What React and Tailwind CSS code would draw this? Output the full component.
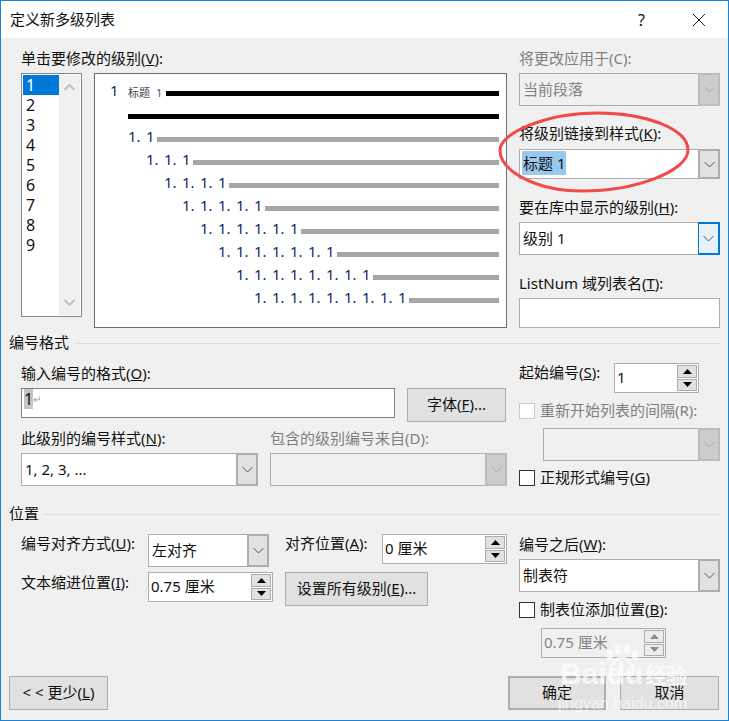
import React from 'react'

const Chevron = ({ className = "stroke-[#555]" }) => (
    <svg width="11" height="7" viewBox="0 0 11 7" fill="none" className={className}>
        <path d="M0.5 1L5.5 6L10.5 1" strokeWidth="1" />
    </svg>
)

const Combo = ({ className, text, mode = "normal" }) => {
    const boxStyle = mode === "disabled" ? "bg-[#f0f0f0]" : "bg-white"
    const textStyle = mode === "disabled" ? "text-[#838383]" : "text-[#111]"
    let arrowStyle = "bg-[#e1e1e1] border-2 border-[#adadad] border-l-[#adadad]"
    if (mode === "disabled") arrowStyle = "bg-[#cccccc] border-2 border-[#bcbcbc]"
    if (mode === "focus") arrowStyle = "bg-[#e5f1fb] border-l border-r-2 border-y-2 border-[#0078d7]"
    return (
        <div className={`flex border border-[#adadad] ${boxStyle} ${className}`}>
            <div className={`flex-1 flex items-center pl-[3px] text-[15px] ${textStyle}`}>{text}</div>
            <div className={`w-[22px] -my-px -mr-px flex items-center justify-center ${arrowStyle}`}>
                <Chevron className={mode === "disabled" ? "stroke-[#a8a8a8]" : "stroke-[#555]"} />
            </div>
        </div>
    )
}

const Spin = ({ className, text, disabled }) => {
    const arrow = disabled ? "fill-[#8a8a8a]" : "fill-black"
    const part = "flex-1 flex items-center justify-center border border-[#adadad] bg-[#e1e1e1]"
    return (
        <div className={`flex h-[30px] border border-[#adadad] ${disabled ? "bg-[#f0f0f0]" : "bg-white"} ${className}`}>
            <div className={`flex-1 flex items-center pl-[2px] pb-[2px] text-[15px] ${disabled ? "text-[#838383]" : "text-[#111]"}`}>{text}</div>
            <div className="w-[20px] flex flex-col gap-px py-px mr-px">
                <div className={`${part} ${disabled ? "bg-[#ececec]" : ""}`}>
                    <svg width="9" height="5" viewBox="0 0 9 5" className={arrow}><path d="M4.5 0L9 5H0Z" /></svg>
                </div>
                <div className={`${part} ${disabled ? "bg-[#ececec]" : ""}`}>
                    <svg width="9" height="5" viewBox="0 0 9 5" className={arrow}><path d="M0 0H9L4.5 5Z" /></svg>
                </div>
            </div>
        </div>
    )
}

const Btn = ({ className, children }) => (
    <div className={`h-[34px] flex items-center justify-center pb-[2px] bg-[#e1e1e1] border border-[#adadad] text-[15px] text-[#111] ${className}`}>
        {children}
    </div>
)

const Label = ({ className = "", children, off }) => (
    <div className={`h-[20px] flex items-center pb-[2px] whitespace-nowrap text-[15px] ${off ? "text-[#7f7f7f]" : "text-[#111]"} ${className}`}>
        <span>{children}</span>
    </div>
)

const Check = ({ off }) => (
    <div className={`w-[16px] h-[16px] border ${off ? "border-[#cccccc]" : "border-[#333]"} bg-white`} />
)

const Section = ({ title }) => (
    <div className="h-[20px] pl-[8px] pr-[8px] flex items-center gap-[5px]">
        <span className="pb-[2px] text-[15px] text-[#111]">{title}</span>
        <div className="flex-1 h-px bg-[#dcdcdc]" />
    </div>
)

const levels = [
    { pad: "pl-[33px]", k: 2 },
    { pad: "pl-[51px]", k: 3 },
    { pad: "pl-[69px]", k: 4 },
    { pad: "pl-[87px]", k: 5 },
    { pad: "pl-[105px]", k: 6 },
    { pad: "pl-[123px]", k: 7 },
    { pad: "pl-[141px]", k: 8 },
    { pad: "pl-[159px]", k: 9 },
]

const Preview = () => (
    <div className="flex-1 h-[255px] border border-[#6d6d6d] bg-white pt-[8px] pr-[7px]">
        <div className="h-[23px] flex items-center pl-[15px]">
            <span className="w-[18px] pb-[7px] text-[15px] text-[#0d2a66]">1</span>
            <span className="w-[38px] text-[11px] text-[#444] whitespace-nowrap">标题<span className="ml-[6px] text-[#2a5a90]">1</span></span>
            <div className="flex-1 h-[5px] bg-black" />
        </div>
        <div className="h-[23px] flex items-center pl-[33px]">
            <div className="flex-1 h-[5px] bg-black" />
        </div>
        {levels.map((l) => (
            <div key={l.k} className={`h-[23px] flex items-center ${l.pad}`}>
                <div className="flex pb-[6px] text-[15px] leading-[17px] text-[#0d2a66]">
                    {Array.from({ length: l.k - 1 }).map((_, i) => (
                        <span key={i} className="w-[18px]">1.</span>
                    ))}
                    <span className="w-[11px]">1</span>
                </div>
                <div className="flex-1 h-[5px] bg-[#a6a6a6]" />
            </div>
        ))}
    </div>
)

const LevelList = () => (
    <div className="w-[61px] h-[244px] flex border border-[#828790] bg-white p-px">
        <div className="w-[37px] text-[16px] leading-[20px] text-[#111]">
            {[1, 2, 3, 4, 5, 6, 7, 8, 9].map((n) => (
                <div key={n} className={`h-[20px] pl-[3px] ${n === 1 ? "bg-[#0078d7] text-white" : ""}`}>{n}</div>
            ))}
        </div>
        <div className="w-[21px] bg-[#f0f0f0] flex flex-col items-center justify-between py-[9px]">
            <svg width="11" height="7" viewBox="0 0 11 7" fill="none" className="stroke-[#c0c0c0]"><path d="M0.5 6L5.5 1L10.5 6" strokeWidth="2" /></svg>
            <svg width="11" height="7" viewBox="0 0 11 7" fill="none" className="stroke-[#c0c0c0]"><path d="M0.5 1L5.5 6L10.5 1" strokeWidth="2" /></svg>
        </div>
    </div>
)

export default function App() {
    return (
        <div className="relative w-[729px] h-[721px] flex flex-col border border-[#1883d7] bg-[#f0f0f0] overflow-hidden font-['Noto_Sans','Noto_Sans_CJK_SC',sans-serif]">
            {/* title bar */}
            <div className="h-[37px] shrink-0 bg-white flex items-center pl-[9px] text-[15px] text-[#111]">
                <span>定义新多级列表</span>
                <span className="ml-auto mr-[47px] text-[16px]">?</span>
                <svg width="14" height="14" viewBox="0 0 14 14" fill="none" className="mr-[22px] stroke-[#222]">
                    <path d="M1 1L13 13M13 1L1 13" strokeWidth="1" />
                </svg>
            </div>

            {/* levels + style links */}
            <div className="flex pl-[20px] pt-[11px]">
                <div className="w-[486px]">
                    <Label>单击要修改的级别(<u>V</u>):</Label>
                    <div className="flex gap-[12px] mt-[4px] items-start">
                        <LevelList />
                        <Preview />
                    </div>
                </div>
                <div className="w-[201px] ml-[12px]">
                    <Label off>将更改应用于(C):</Label>
                    <Combo className="h-[33px] mt-[4px]" text="当前段落" mode="disabled" />
                    <Label className="mt-[18px]">将级别链接到样式(<u>K</u>):</Label>
                    <Combo
                        className="h-[30px] mt-[5px]"
                        text={<span className="bg-[#99c9ef] -ml-px -mt-[3px] px-px leading-[24px]">标题 1</span>}
                    />
                    <Label className="mt-[19px]">要在库中显示的级别(<u>H</u>):</Label>
                    <Combo className="h-[33px] mt-[4px]" text="级别 1" mode="focus" />
                    <Label className="mt-[19px]">ListNum 域列表名(<u>T</u>):</Label>
                    <div className="h-[30px] mt-[4px] bg-white border border-[#adadad]" />
                </div>
            </div>

            {/* number format */}
            <div className="mt-[5px]">
                <Section title="编号格式" />
            </div>
            <div className="flex pl-[20px]">
                <div className="w-[486px] pt-[11px]">
                    <Label>输入编号的格式(<u>O</u>):</Label>
                    <div className="flex items-start gap-[12px] mt-[4px]">
                        <div className="w-[374px] h-[30px] flex items-start bg-white border border-[#808080] pl-[2px] text-[16px] text-[#111]">
                            <span className="h-[20px] leading-[20px] bg-[#c4c4c4] w-[9px]">1</span>
                            <span className="text-[10px] leading-[20px] text-[#999]">↵</span>
                        </div>
                        <Btn className="w-[99px]">字体(<u>F</u>)...</Btn>
                    </div>
                    <div className="flex gap-[12px] mt-[7px]">
                        <div className="w-[237px]">
                            <Label>此级别的编号样式(<u>N</u>):</Label>
                            <Combo className="h-[33px] mt-[4px]" text="1, 2, 3, ..." />
                        </div>
                        <div className="w-[237px]">
                            <Label off>包含的级别编号来自(D):</Label>
                            <Combo className="h-[33px] mt-[4px]" text="" mode="disabled" />
                        </div>
                    </div>
                </div>
                <div className="w-[201px] ml-[12px] pt-[10px]">
                    <div className="flex justify-between pr-[21px]">
                        <Label>起始编号(<u>S</u>):</Label>
                        <Spin className="w-[85px]" text="1" />
                    </div>
                    <div className="h-[16px] flex items-center gap-[5px] mt-[10px]">
                        <Check off />
                        <Label off>重新开始列表的间隔(R):</Label>
                    </div>
                    <Combo className="h-[33px] mt-[9px] ml-[24px]" text="" mode="disabled" />
                    <div className="h-[16px] flex items-center gap-[5px] mt-[9px]">
                        <Check />
                        <Label>正规形式编号(<u>G</u>)</Label>
                    </div>
                </div>
            </div>

            {/* position */}
            <div className="mt-[18px]">
                <Section title="位置" />
            </div>
            <div className="flex pl-[20px] pt-[10px]">
                <div className="w-[486px] flex flex-col gap-[5px]">
                    <div className="flex items-start">
                        <Label className="w-[127px]">编号对齐方式(<u>U</u>):</Label>
                        <Combo className="w-[121px] h-[33px]" text="左对齐" />
                        <Label className="w-[97px] ml-[16px]">对齐位置(<u>A</u>):</Label>
                        <Spin className="w-[125px]" text="0 厘米" />
                    </div>
                    <div className="flex items-start">
                        <Label className="w-[127px] mt-px">文本缩进位置(<u>I</u>):</Label>
                        <Spin className="w-[125px]" text="0.75 厘米" />
                        <Btn className="w-[143px] ml-[12px]">设置所有级别(<u>E</u>)...</Btn>
                    </div>
                </div>
                <div className="w-[201px] ml-[12px]">
                    <Label className="mt-px">编号之后(<u>W</u>):</Label>
                    <Combo className="h-[33px] mt-[4px]" text="制表符" />
                    <div className="h-[16px] flex items-center gap-[5px] mt-[10px]">
                        <Check />
                        <Label>制表位添加位置(<u>B</u>):</Label>
                    </div>
                    <Spin className="w-[125px] ml-[22px] mt-[10px]" text="0.75 厘米" disabled />
                </div>
            </div>

            {/* bottom buttons */}
            <div className="mt-auto flex pl-[8px] pr-[9px] pb-[10px]">
                <Btn className="w-[99px]">&lt; &lt; 更少(<u>L</u>)</Btn>
                <Btn className="w-[98px] ml-auto border-2 border-[#0078d7]">确定</Btn>
                <Btn className="w-[99px] ml-[14px]">取消</Btn>
            </div>

            {/* red hand-drawn ellipse */}
            <svg className="absolute left-[495px] top-[108px] pointer-events-none" width="200" height="88" viewBox="0 0 200 88" fill="none">
                <path
                    d="M4 41C4 24 50 4 102 4C150 4 192 20 192 41C192 62 140 82 86 82C40 82 4 62 4 41Z"
                    className="stroke-[#f04a4a]"
                    strokeWidth="3"
                />
            </svg>

            {/* watermark */}
            <div className="absolute left-[556px] top-[641px] w-[140px] h-[75px] pointer-events-none text-white">
                <svg className="absolute left-[46px] top-0 opacity-70" width="38" height="38" viewBox="0 0 44 40" fill="none">
                    <ellipse cx="8" cy="13" rx="4" ry="6" fill="white" />
                    <ellipse cx="17" cy="6" rx="4" ry="6" fill="white" />
                    <ellipse cx="28" cy="6" rx="4" ry="6" fill="white" />
                    <ellipse cx="37" cy="13" rx="4" ry="6" fill="white" />
                    <path d="M22 16C15 16 8 26 9 32C10 37 16 36 22 35C28 36 34 37 35 32C36 26 29 16 22 16Z" stroke="white" strokeWidth="3" />
                </svg>
                <div className="absolute left-[3px] top-[17px] flex items-center text-[30px] leading-[30px] font-bold opacity-70 font-['Liberation_Sans',sans-serif]">
                    <span>Bai</span>
                    <span>du</span>
                    <span className="ml-[2px] text-[21px] font-['Noto_Sans_CJK_SC',sans-serif]">经验</span>
                </div>
                <div className="absolute left-[1px] top-[50px] text-[16px] opacity-60 whitespace-nowrap font-['Liberation_Sans',sans-serif]">jingyan.baidu.com</div>
            </div>
        </div>
    )
}
